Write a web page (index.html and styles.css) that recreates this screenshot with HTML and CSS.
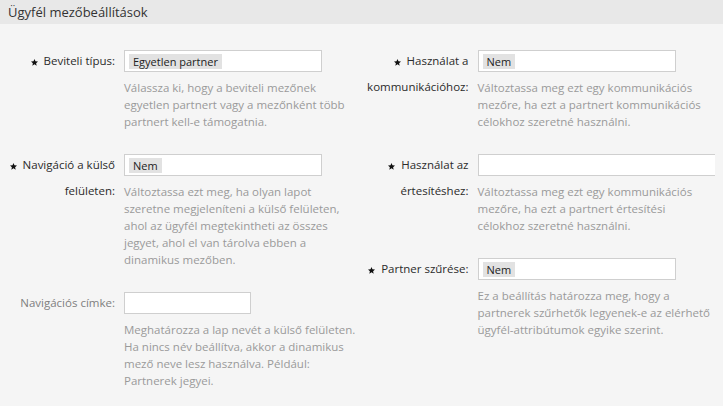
FILE: index.html
```html
<!DOCTYPE html>
<html lang="hu">
<head>
<meta charset="utf-8">
<title>Ügyfél mezőbeállítások</title>
<link rel="stylesheet" href="styles.css">
</head>
<body>
<div class="panel">
  <div class="panel-head">Ügyfél mezőbeállítások</div>
  <div class="panel-body">
    <div class="col">
      <div class="field">
        <label class="label mandatory"><svg class="star" viewBox="0 0 10 10"><polygon points="5,0 6.4,3.3 10,3.6 7.3,5.9 8.1,9.5 5,7.6 1.9,9.5 2.7,5.9 0,3.6 3.6,3.3"/></svg>Beviteli típus:</label>
        <div class="control">
          <div class="select"><span class="tag">Egyetlen partner</span></div>
          <p class="desc">Válassza ki, hogy a beviteli mezőnek egyetlen partnert vagy a mezőnként több partnert kell-e támogatnia.</p>
        </div>
      </div>
      <div class="field">
        <label class="label mandatory"><svg class="star" viewBox="0 0 10 10"><polygon points="5,0 6.4,3.3 10,3.6 7.3,5.9 8.1,9.5 5,7.6 1.9,9.5 2.7,5.9 0,3.6 3.6,3.3"/></svg>Navigáció a külső felületen:</label>
        <div class="control">
          <div class="select"><span class="tag">Nem</span></div>
          <p class="desc">Változtassa ezt meg, ha olyan lapot szeretne megjeleníteni a külső felületen, ahol az ügyfél megtekintheti az összes jegyet, ahol el van tárolva ebben a dinamikus mezőben.</p>
        </div>
      </div>
      <div class="field">
        <label class="label optional">Navigációs címke:</label>
        <div class="control">
          <input class="text-input short" type="text">
          <p class="desc">Meghatározza a lap nevét a külső felületen. Ha nincs név beállítva, akkor a dinamikus mező neve lesz használva. Például: Partnerek jegyei.</p>
        </div>
      </div>
    </div>
    <div class="col">
      <div class="field">
        <label class="label mandatory"><svg class="star" viewBox="0 0 10 10"><polygon points="5,0 6.4,3.3 10,3.6 7.3,5.9 8.1,9.5 5,7.6 1.9,9.5 2.7,5.9 0,3.6 3.6,3.3"/></svg>Használat a kommunikációhoz:</label>
        <div class="control">
          <div class="select"><span class="tag">Nem</span></div>
          <p class="desc">Változtassa meg ezt egy kommunikációs mezőre, ha ezt a partnert kommunikációs célokhoz szeretné használni.</p>
        </div>
      </div>
      <div class="field">
        <label class="label mandatory"><svg class="star" viewBox="0 0 10 10"><polygon points="5,0 6.4,3.3 10,3.6 7.3,5.9 8.1,9.5 5,7.6 1.9,9.5 2.7,5.9 0,3.6 3.6,3.3"/></svg>Használat az értesítéshez:</label>
        <div class="control">
          <div class="select wide"></div>
          <p class="desc">Változtassa meg ezt egy kommunikációs mezőre, ha ezt a partnert értesítési célokhoz szeretné használni.</p>
        </div>
      </div>
      <div class="field">
        <label class="label mandatory"><svg class="star" viewBox="0 0 10 10"><polygon points="5,0 6.4,3.3 10,3.6 7.3,5.9 8.1,9.5 5,7.6 1.9,9.5 2.7,5.9 0,3.6 3.6,3.3"/></svg>Partner szűrése:</label>
        <div class="control">
          <div class="select"><span class="tag">Nem</span></div>
          <p class="desc">Ez a beállítás határozza meg, hogy a partnerek szűrhetők legyenek-e az elérhető ügyfél-attribútumok egyike szerint.</p>
        </div>
      </div>
    </div>
  </div>
</div>
</body>
</html>
```
FILE: styles.css
```css
html, body {
  margin: 0;
  height: 100%;
  background: #f5f5f5;
  font-family: "Open Sans", "Noto Sans", sans-serif;
  color: #333;
}
.panel {
  width: 723px;
  height: 406px;
  overflow: hidden;
}
.panel-head {
  height: 24px;
  line-height: 24px;
  padding: 0 8px;
  background: #e8e8e8;
  font-size: 13px;
  color: #333;
}
.panel-body {
  display: grid;
  grid-template-columns: 1fr 1fr;
  padding: 26px 8px 0;
}
.col {
  overflow: hidden;
  display: flex;
  flex-direction: column;
  gap: 24px;
}
.field {
  display: flex;
  align-items: flex-start;
}
.label {
  flex: none;
  width: 107px;
  padding-right: 9px;
  margin-top: -2px;
  text-align: right;
  font-size: 11.5px;
  line-height: 26px;
  color: #2b2b2b;
}
.label.optional {
  color: #808080;
}
.star {
  width: 7px;
  height: 7px;
  margin-right: 6px;
  vertical-align: -1px;
  fill: #111;
}
.control {
  flex: 1;
  min-width: 0;
}
.select,
.text-input {
  box-sizing: border-box;
  display: flex;
  align-items: center;
  width: 198px;
  height: 22px;
  margin: 0;
  padding: 0 0 0 4px;
  border: 1px solid #cfcfcf;
  background: #fff;
}
.select.wide {
  width: 260px;
}
.text-input.short {
  width: 127px;
}
.tag {
  height: 15px;
  line-height: 15px;
  padding: 0 4px;
  background: #e2e2e2;
  font-size: 11px;
  color: #222;
}
.desc {
  width: 235px;
  margin: 7px 0 0;
  font-size: 11.5px;
  line-height: 17px;
  color: #9a9a9a;
}
```
